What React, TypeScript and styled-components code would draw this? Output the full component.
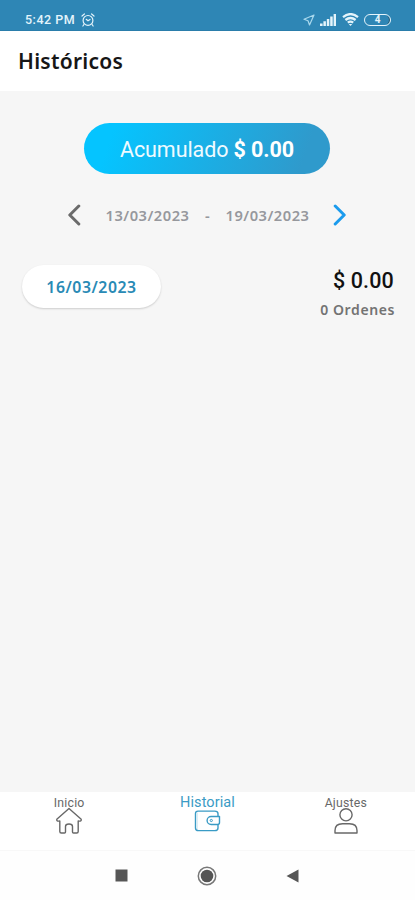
import React from "react";
import styled, { createGlobalStyle } from "styled-components";

const GlobalStyle = createGlobalStyle`
  * { box-sizing: border-box; }
  body { margin: 0; background: #f6f6f6; }
`;

const Screen = styled.div`
  width: 415px;
  height: 900px;
  display: flex;
  flex-direction: column;
  overflow: hidden;
  background: #f6f6f6;
  font-family: "Noto Sans", sans-serif;
`;

const StatusBar = styled.header`
  height: 31px;
  flex: none;
  display: flex;
  align-items: center;
  justify-content: space-between;
  padding: 9px 24px 0 25px;
  background: #2e86b5;
  border-bottom: 1px solid #2a7dab;
  color: #e4f4fb;
`;

const StatusGroup = styled.div<{ $gap: number }>`
  display: flex;
  align-items: center;
  gap: ${(p) => p.$gap}px;
  svg { display: block; }
`;

const Clock = styled.span`
  font: 500 12.5px/16px Roboto, sans-serif;
  letter-spacing: 0.5px;
  white-space: nowrap;
`;

const TitleBar = styled.div`
  height: 60px;
  flex: none;
  padding: 0 18px;
  background: #fff;
`;

const Title = styled.h1`
  margin: 0;
  font-size: 21px;
  font-weight: 600;
  line-height: 60px;
  letter-spacing: 0.25px;
  color: #161616;
`;

const Content = styled.main`
  flex: 1;
  display: flex;
  flex-direction: column;
  align-items: center;
  padding: 32px 1px 0 0;
`;

const Total = styled.div`
  width: 246px;
  height: 51px;
  border-radius: 26px;
  background: linear-gradient(110deg, #05c4ff 12%, #2f9acc 88%);
  color: #effaff;
  font: 400 21.5px/53px Roboto, sans-serif;
  letter-spacing: -0.09px;
  text-align: center;
  white-space: nowrap;
  strong { font-weight: 700; color: #fff; }
`;

const Range = styled.div`
  width: 280px;
  height: 30px;
  margin-top: 26px;
  display: flex;
  align-items: center;
  justify-content: space-between;
  svg { display: block; }
`;

const Dates = styled.div`
  width: 204px;
  display: flex;
  justify-content: space-between;
  margin-left: 1px;
  color: #96989d;
  font-size: 14.7px;
  font-weight: 600;
  line-height: 20px;
  letter-spacing: 0.5px;
`;

const DayRow = styled.div`
  align-self: stretch;
  display: flex;
  justify-content: space-between;
  padding: 0 19px 0 22px;
  margin-top: 34px;
`;

const DayChip = styled.div`
  width: 139px;
  height: 43px;
  margin-top: 1px;
  border-radius: 22px;
  background: #fff;
  box-shadow: 0 1px 2px rgba(0, 0, 0, 0.17);
  color: #298ab5;
  font-size: 15.8px;
  font-weight: 600;
  line-height: 45px;
  letter-spacing: 0.55px;
  text-align: center;
`;

const DaySummary = styled.div`
  display: flex;
  flex-direction: column;
  align-items: flex-end;
`;

const Amount = styled.div`
  font: 500 21.5px/34px Roboto, sans-serif;
  letter-spacing: 0.15px;
  padding-right: 1px;
  color: #111;
`;

const Orders = styled.div`
  font-size: 14px;
  font-weight: 600;
  line-height: 24px;
  letter-spacing: 0.6px;
  color: #737373;
`;

const TabBar = styled.nav`
  height: 59px;
  flex: none;
  display: grid;
  grid-template-columns: repeat(3, 1fr);
  padding-top: 2px;
  background: #fff;
  border-bottom: 1px solid #f8f8f8;
`;

const Tab = styled.div<{ $active?: boolean }>`
  display: flex;
  flex-direction: column;
  align-items: center;
  color: ${(p) => (p.$active ? "#3a9bc5" : "#686868")};
  svg { display: block; margin-top: -5px; }
`;

const TabLabel = styled.span<{ $size: number; $spacing: number }>`
  font-family: Roboto, sans-serif;
  font-size: ${(p) => p.$size}px;
  letter-spacing: ${(p) => p.$spacing}px;
  line-height: 18px;
`;

const SystemNav = styled.footer`
  height: 49px;
  flex: none;
  display: flex;
  align-items: center;
  justify-content: space-between;
  padding: 0 116px 0 115px;
  background: #fefefe;
  svg { display: block; }
`;

function AlarmIcon() {
  return (
    <svg width="14" height="14" viewBox="0 0 14 14" fill="none" stroke="currentColor" strokeWidth="1.2" strokeLinecap="round">
      <circle cx="7" cy="7.4" r="4.9" />
      <path d="M1 3 3.4 1M13 3 10.6 1M2.9 11.5 1.9 13M11.1 11.5l1 1.5M5.2 6.3 7 7.8l2-1.3" />
    </svg>
  );
}

function LocationIcon() {
  return (
    <svg width="12" height="12" viewBox="0 0 12 12" fill="none" stroke="#a8d8ed" strokeWidth="1.2" strokeLinejoin="round">
      <path d="M11 1 1 5.2l4 1.5 1.5 4.3L11 1Z" />
    </svg>
  );
}

function SignalIcon() {
  return (
    <svg width="17" height="12" viewBox="0 0 17 12" fill="currentColor">
      <path d="M0 9.4h2.6V12H0zM3.4 7.3h2.5V12H3.4zM6.8 5h2.5v7H6.8zM10.2 2.5h2.5V12h-2.5zM13.6 0H16v12h-2.4z" />
    </svg>
  );
}

function WifiIcon() {
  return (
    <svg width="17" height="13" viewBox="0 0 17 13" fill="none" stroke="currentColor" strokeWidth="2.3">
      <path d="M1 4.1Q8.5-1.9 16 4.1M3.4 7Q8.5 3 13.6 7M5.8 9.7Q8.5 7.6 11.2 9.7" />
      <path d="m6.8 11 1.7 2 1.7-2Z" fill="currentColor" stroke="none" />
    </svg>
  );
}

const Battery = styled.div`
  width: 27px;
  height: 12px;
  border: 1.5px solid currentColor;
  border-radius: 6px;
  display: flex;
  align-items: center;
  justify-content: center;
  font: 700 10px/10px Roboto, sans-serif;
  box-shadow: inset -2px 0 0 -1px #24546c;
`;

function Chevron({ left }: { left?: boolean }) {
  return (
    <svg width="14" height="22" viewBox="0 0 14 22" fill="none" stroke={left ? "#6b6b6b" : "#1b9bed"} strokeWidth="3" strokeLinecap="round" strokeLinejoin="round">
      <path d={left ? "m11.8 2-9 9 9 9" : "m2.2 2 9 9-9 9"} />
    </svg>
  );
}

function HomeIcon() {
  return (
    <svg width="28" height="28" viewBox="0 0 28 28" fill="none" stroke="currentColor" strokeWidth="1.4" strokeLinejoin="round">
      <path d="M14 1.5 1.8 12.2Q1.2 14.5 4.8 14v10.5q0 1.5 1.5 1.5h3.2q1 0 1-1v-5.5q0-2.5 3.5-2.5t3.5 2.5V25q0 1 1 1h3.2q1.5 0 1.5-1.5V14q3.6.5 3-1.8L14 1.5Z" />
    </svg>
  );
}

function WalletIcon() {
  return (
    <svg width="28" height="28" viewBox="0 0 28 28" fill="none" stroke="currentColor" strokeWidth="1.4" strokeLinejoin="round">
      <path d="M25 9.5V6.8q0-2.7-3.2-2.7H5q-2.5 0-2.5 2.5v14.3q0 2.7 3 2.7h16.3q3.2 0 3.2-2.7V17.3" />
      <path d="M3.2 4.7q1.3.6 1.3 2.1v13.9q0 2.2-1 2.5" strokeWidth=".5" opacity=".35" />
      <path d="M26.5 9.5h-8.4a4 4 0 0 0 0 8h6.4q2 0 2-2v-6Z" />
      <circle cx="18.3" cy="13.5" r="1.1" strokeWidth="1" />
    </svg>
  );
}

function UserIcon() {
  return (
    <svg width="28" height="28" viewBox="0 0 28 28" fill="none" stroke="currentColor" strokeWidth="1.4" strokeLinejoin="round">
      <circle cx="14" cy="7.8" r="6.1" />
      <path d="M3 26v-2.5q0-6.7 7.5-6.7h7q7.5 0 7.5 6.7V26H3Z" />
    </svg>
  );
}

export default function App() {
  return (
    <>
      <GlobalStyle />
      <Screen>
        <StatusBar>
          <StatusGroup $gap={6}>
            <Clock>5:42 PM</Clock>
            <AlarmIcon />
          </StatusGroup>
          <StatusGroup $gap={5}>
            <LocationIcon />
            <SignalIcon />
            <WifiIcon />
            <Battery>4</Battery>
          </StatusGroup>
        </StatusBar>
        <TitleBar>
          <Title>Históricos</Title>
        </TitleBar>
        <Content>
          <Total>
            Acumulado <strong>$ 0.00</strong>
          </Total>
          <Range>
            <Chevron left />
            <Dates>
              <span>13/03/2023</span>
              <span>-</span>
              <span>19/03/2023</span>
            </Dates>
            <Chevron />
          </Range>
          <DayRow>
            <DayChip>16/03/2023</DayChip>
            <DaySummary>
              <Amount>$ 0.00</Amount>
              <Orders>0 Ordenes</Orders>
            </DaySummary>
          </DayRow>
        </Content>
        <TabBar>
          <Tab>
            <TabLabel $size={12.3} $spacing={0.2}>Inicio</TabLabel>
            <HomeIcon />
          </Tab>
          <Tab $active>
            <TabLabel $size={14.5} $spacing={0.1}>Historial</TabLabel>
            <WalletIcon />
          </Tab>
          <Tab>
            <TabLabel $size={12.3} $spacing={0.2}>Ajustes</TabLabel>
            <UserIcon />
          </Tab>
        </TabBar>
        <SystemNav>
          <svg width="13" height="13" viewBox="0 0 13 13">
            <path d="M.5.5h12v12H.5z" fill="#565656" />
          </svg>
          <svg width="20" height="20" viewBox="0 0 20 20">
            <circle cx="10" cy="10" r="8.7" fill="none" stroke="#777" strokeWidth="1.5" />
            <circle cx="10" cy="10" r="6.3" fill="#555" />
          </svg>
          <svg width="13" height="14" viewBox="0 0 13 14">
            <path d="M12.5.5v13L.5 7z" fill="#565656" />
          </svg>
        </SystemNav>
      </Screen>
    </>
  );
}
